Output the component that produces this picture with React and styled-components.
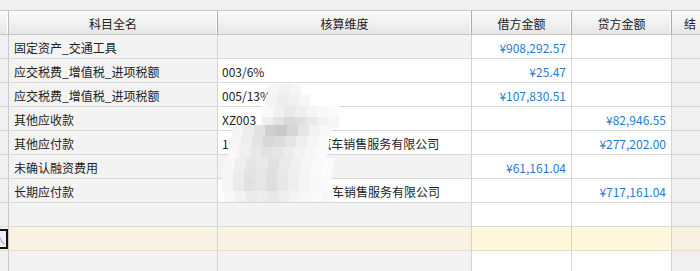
import React from "react";
import styled, { createGlobalStyle, css } from "styled-components";

const Global = createGlobalStyle`
  html, body {
    margin: 0;
    padding: 0;
    background: #f0f0f0;
    overflow: hidden;
  }
  body {
    font-family: "Noto Sans CJK SC", "Noto Sans", sans-serif;
    font-size: 12px;
    color: #222;
  }
`;

const COLS = [9, 209, 254, 100, 100, 40];

const Sheet = styled.div`
  width: 700px;
  height: 271px;
  overflow: hidden;
  background: #f0f0f0;
`;

const TopStrip = styled.div`
  height: 10px;
  background: #f0f0f0;
  border-bottom: 1px solid #c9c9c9;
`;

const HeaderRow = styled.div`
  display: flex;
  height: 23px;
  background: linear-gradient(#fbfbfb, #f1f1f1 50%, #e6e6e6);
  border-bottom: 1px solid #c4c4c4;
`;

const HeaderCell = styled.div`
  flex: 0 0 ${(p) => p.$w}px;
  box-sizing: border-box;
  display: flex;
  align-items: center;
  justify-content: ${(p) => (p.$lead ? "flex-start" : "center")};
  padding: 1px 0 0 ${(p) => (p.$lead ? 12 : 0)}px;
  border-right: 1px solid #a9a9a9;
  box-shadow: inset -1px 0 0 #ffffff;
  white-space: nowrap;
  overflow: hidden;
  color: #222;
  ${(p) =>
    p.$first &&
    css`
      border-right-color: #bdbdbd;
    `}
`;

const Row = styled.div`
  display: flex;
  height: 23px;
  border-bottom: 1px solid #d8d8d8;
  ${(p) =>
    p.$active &&
    css`
      border-bottom-color: #e6dcc0;
    `}
`;

const tones = {
  stub: "#f0f0f0",
  gray: "#f3f3f3",
  white: "#ffffff",
  side: "#f0f0f0",
};

const activeTones = {
  stub: "#f0f0f0",
  gray: "#f8f3e3",
  white: "#fff8dc",
  side: "#f6f1e1",
};

const Cell = styled.div`
  flex: 0 0 ${(p) => p.$w}px;
  box-sizing: border-box;
  display: flex;
  align-items: center;
  padding: 2px ${(p) => (p.$num ? 5 : 4)}px 0 ${(p) => (p.$pad ?? 4)}px;
  justify-content: ${(p) => (p.$num ? "flex-end" : "flex-start")};
  border-right: 1px solid #d4d4d4;
  white-space: nowrap;
  overflow: hidden;
  color: ${(p) => (p.$num ? "#1f7ad6" : "#222")};
  background: ${(p) => (p.$active ? activeTones[p.$tone] : tones[p.$tone])};
`;

const StubCell = styled(Cell)`
  position: relative;
  overflow: visible;
  border-right-color: #c9c9c9;
`;

/* gap inside a 核算维度 value, where the hidden part of the name sits */
const Gap = styled.span`
  display: inline-block;
  width: ${(p) => p.$w}px;
`;

/* edit cursor that sits over the row-header stub */
const EditMark = styled.div`
  position: absolute;
  left: -6px;
  top: 2px;
  width: 14px;
  height: 20px;
  box-sizing: border-box;
  border: 2px solid #111;
  display: flex;
  align-items: center;
  justify-content: flex-end;
  padding-right: 1px;
  color: #9a9a9a;
  font-size: 11px;
  overflow: hidden;
`;

const MaskedArea = styled.div`
  position: relative;
`;

/* pixel mosaic laid over part of the 核算维度 column */
const Mosaic = styled.div`
  position: absolute;
  left: 0;
  top: 0;
  width: 0;
  height: 0;
  pointer-events: none;
`;

const Block = styled.div`
  position: absolute;
  width: 11px;
  height: 11px;
`;

const rows = [
  { name: "固定资产_交通工具", dim: null, debit: "¥908,292.57", credit: "", dimTone: "gray" },
  { name: "应交税费_增值税_进项税额", dim: "003/6%", debit: "¥25.47", credit: "", dimTone: "white" },
  { name: "应交税费_增值税_进项税额", dim: "005/13%", debit: "¥107,830.51", credit: "", dimTone: "white" },
  { name: "其他应收款", dim: "XZ003", debit: "", credit: "¥82,946.55", dimTone: "white" },
  { name: "其他应付款", dim: ["15", 84, "汽车销售服务有限公司"], debit: "", credit: "¥277,202.00", dimTone: "white" },
  { name: "未确认融资费用", dim: null, debit: "¥61,161.04", credit: "", dimTone: "gray" },
  { name: "长期应付款", dim: ["", 98, "汽车销售服务有限公司"], debit: "", credit: "¥717,161.04", dimTone: "white" },
  { name: "", dim: null, debit: "", credit: "", dimTone: "gray" },
  { name: "", dim: null, debit: "", credit: "", dimTone: "gray", active: true },
  { name: "", dim: null, debit: "", credit: "", dimTone: "gray" },
];

// mosaic tiles, in page coordinates
const tiles = [];
const mosaicRows = [
  { y: 84, from: 268, to: 292, shades: ["#f6f6f6", "#f1f1f1"] },
  { y: 95, from: 266, to: 310, shades: ["#f3f3f3", "#ececec", "#f0f0f0", "#f7f7f7"] },
  { y: 106, from: 262, to: 330, shades: ["#fafafa", "#f1f1f1", "#e9e9e9", "#eeeeee", "#f4f4f4", "#f8f8f8", "#fbfbfb"] },
  { y: 117, from: 262, to: 330, shades: ["#efefef", "#e3e3e3", "#d9d9d9", "#dfdfdf", "#e9e9e9", "#f1f1f1", "#f6f6f6"] },
  { y: 125, from: 232, to: 326, shades: ["#f5f5f5", "#ededed", "#e2e2e2", "#cfcfcf", "#c9c9c9", "#d6d6d6", "#e6e6e6", "#f2f2f2", "#f8f8f8"] },
  { y: 136, from: 230, to: 326, shades: ["#f6f6f6", "#eeeeee", "#e4e4e4", "#d8d8d8", "#dcdcdc", "#e5e5e5", "#eeeeee", "#f5f5f5", "#f9f9f9"] },
  { y: 147, from: 228, to: 326, shades: ["#f8f8f8", "#f0f0f0", "#e8e8e8", "#e2e2e2", "#e6e6e6", "#ececec", "#f2f2f2", "#f7f7f7", "#fafafa"] },
  { y: 158, from: 224, to: 330, shades: ["#f7f7f7", "#efefef", "#e6e6e6", "#e9e9e9", "#e1e1e1", "#eaeaea", "#f0f0f0", "#f6f6f6", "#fafafa", "#fbfbfb"] },
  { y: 169, from: 222, to: 330, shades: ["#f6f6f6", "#ececec", "#e3e3e3", "#e7e7e7", "#dfdfdf", "#e8e8e8", "#efefef", "#f5f5f5", "#f9f9f9", "#fbfbfb"] },
  { y: 180, from: 222, to: 330, shades: ["#f5f5f5", "#ebebeb", "#e1e1e1", "#e6e6e6", "#dedede", "#e7e7e7", "#eeeeee", "#f4f4f4", "#f8f8f8", "#fafafa"] },
  { y: 191, from: 224, to: 326, shades: ["#f8f8f8", "#f1f1f1", "#ebebeb", "#eeeeee", "#e9e9e9", "#efefef", "#f4f4f4", "#f8f8f8", "#fafafa"] },
];
mosaicRows.forEach((r) => {
  let i = 0;
  for (let x = r.from; x < r.to; x += 11) {
    tiles.push([x, r.y, r.shades[i % r.shades.length]]);
    i += 1;
  }
});

function DimValue({ value }) {
  if (!value) return null;
  if (typeof value === "string") return value;
  const [head, gap, tail] = value;
  return (
    <>
      {head}
      <Gap $w={gap} />
      {tail}
    </>
  );
}

export default function App() {
  return (
    <Sheet>
      <Global />
      <TopStrip />
      <HeaderRow>
        <HeaderCell $w={COLS[0]} $first />
        <HeaderCell $w={COLS[1]}>科目全名</HeaderCell>
        <HeaderCell $w={COLS[2]}>核算维度</HeaderCell>
        <HeaderCell $w={COLS[3]}>借方金额</HeaderCell>
        <HeaderCell $w={COLS[4]}>贷方金额</HeaderCell>
        <HeaderCell $w={COLS[5]} $lead>
          结
        </HeaderCell>
      </HeaderRow>
      <MaskedArea>
        {rows.map((r, i) => (
          <Row key={i} $active={r.active}>
            <StubCell $w={COLS[0]} $tone="stub" $active={r.active} $pad={0}>
              {r.active && <EditMark>入</EditMark>}
            </StubCell>
            <Cell $w={COLS[1]} $tone="gray" $active={r.active} $pad={5}>
              {r.name}
            </Cell>
            <Cell $w={COLS[2]} $tone={r.dimTone} $active={r.active}>
              <DimValue value={r.dim} />
            </Cell>
            <Cell $w={COLS[3]} $tone="white" $active={r.active} $num>
              {r.debit}
            </Cell>
            <Cell $w={COLS[4]} $tone="white" $active={r.active} $num>
              {r.credit}
            </Cell>
            <Cell $w={COLS[5]} $tone="side" $active={r.active} />
          </Row>
        ))}
        <Mosaic>
          {tiles.map(([x, y, c], i) => (
            <Block key={i} style={{ left: x, top: y - 35, background: c }} />
          ))}
        </Mosaic>
      </MaskedArea>
    </Sheet>
  );
}
